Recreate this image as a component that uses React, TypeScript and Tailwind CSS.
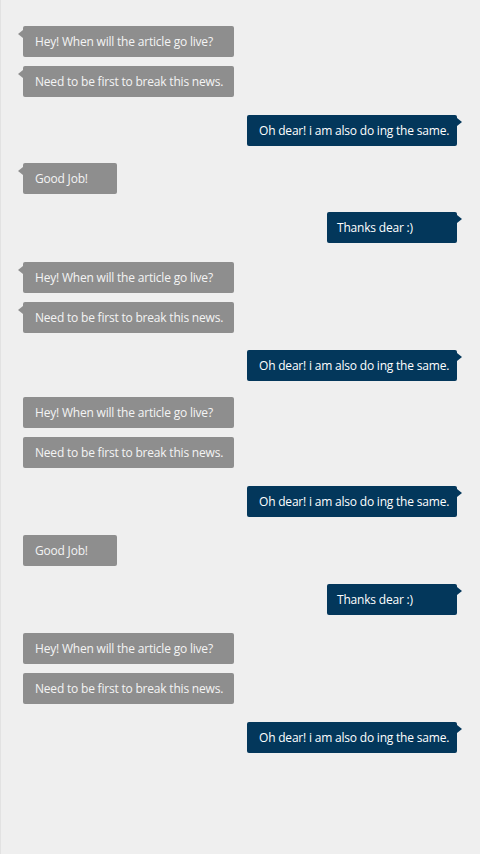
type Msg = {
  text: string
  side: "left" | "right"
  tail: boolean
  w: string
  gap: string
}

const messages: Msg[] = [
  { text: "Hey! When will the article go live?", side: "left", tail: true, w: "w-[211px]", gap: "mt-0" },
  { text: "Need to be first to break this news.", side: "left", tail: true, w: "w-[211px]", gap: "mt-[9px]" },
  { text: "Oh dear! i am also do ing the same.", side: "right", tail: true, w: "w-[210px] pl-[12px]", gap: "mt-[18px]" },
  { text: "Good Job!", side: "left", tail: true, w: "w-[94px]", gap: "mt-[17px]" },
  { text: "Thanks dear :)", side: "right", tail: true, w: "w-[130px] pl-[10px]", gap: "mt-[18px]" },
  { text: "Hey! When will the article go live?", side: "left", tail: true, w: "w-[211px]", gap: "mt-[19px]" },
  { text: "Need to be first to break this news.", side: "left", tail: true, w: "w-[211px]", gap: "mt-[9px]" },
  { text: "Oh dear! i am also do ing the same.", side: "right", tail: true, w: "w-[210px] pl-[12px]", gap: "mt-[17px]" },
  { text: "Hey! When will the article go live?", side: "left", tail: false, w: "w-[211px]", gap: "mt-[16px]" },
  { text: "Need to be first to break this news.", side: "left", tail: false, w: "w-[211px]", gap: "mt-[9px]" },
  { text: "Oh dear! i am also do ing the same.", side: "right", tail: true, w: "w-[210px] pl-[12px]", gap: "mt-[18px]" },
  { text: "Good Job!", side: "left", tail: false, w: "w-[94px]", gap: "mt-[18px]" },
  { text: "Thanks dear :)", side: "right", tail: true, w: "w-[130px] pl-[10px]", gap: "mt-[18px]" },
  { text: "Hey! When will the article go live?", side: "left", tail: false, w: "w-[211px]", gap: "mt-[18px]" },
  { text: "Need to be first to break this news.", side: "left", tail: false, w: "w-[211px]", gap: "mt-[9px]" },
  { text: "Oh dear! i am also do ing the same.", side: "right", tail: true, w: "w-[210px] pl-[12px]", gap: "mt-[18px]" },
]

function Bubble({ m }: { m: Msg }) {
  const left = m.side === "left"
  return (
    <div
      className={`relative ${m.w} ${m.gap} h-[31px] flex items-center rounded-[2px] text-[12px] tracking-[-0.2px] whitespace-nowrap ${
        left ? "self-start bg-[#8e8e8e] text-[#f4f4f4] pl-[12px]" : "self-end bg-[#03375b] text-white"
      }`}
    >
      {m.tail && left && (
        <span className="absolute left-[-5px] top-[4px] w-0 h-0 border-y-[4px] border-y-transparent border-r-[5px] border-r-[#8e8e8e]" />
      )}
      {m.tail && !left && (
        <span className="absolute right-[-5px] top-[3px] w-0 h-0 border-y-[4px] border-y-transparent border-l-[5px] border-l-[#03375b]" />
      )}
      {m.text}
    </div>
  )
}

export default function App() {
  return (
    <div className="min-h-[854px] bg-[#efefef] border-l border-[#e2e2e2] font-['Open_Sans',sans-serif]">
      <div className="flex flex-col pt-[26px] pl-[22px] pr-[23px] pb-8">
        {messages.map((m, i) => (
          <Bubble key={i} m={m} />
        ))}
      </div>
    </div>
  )
}
